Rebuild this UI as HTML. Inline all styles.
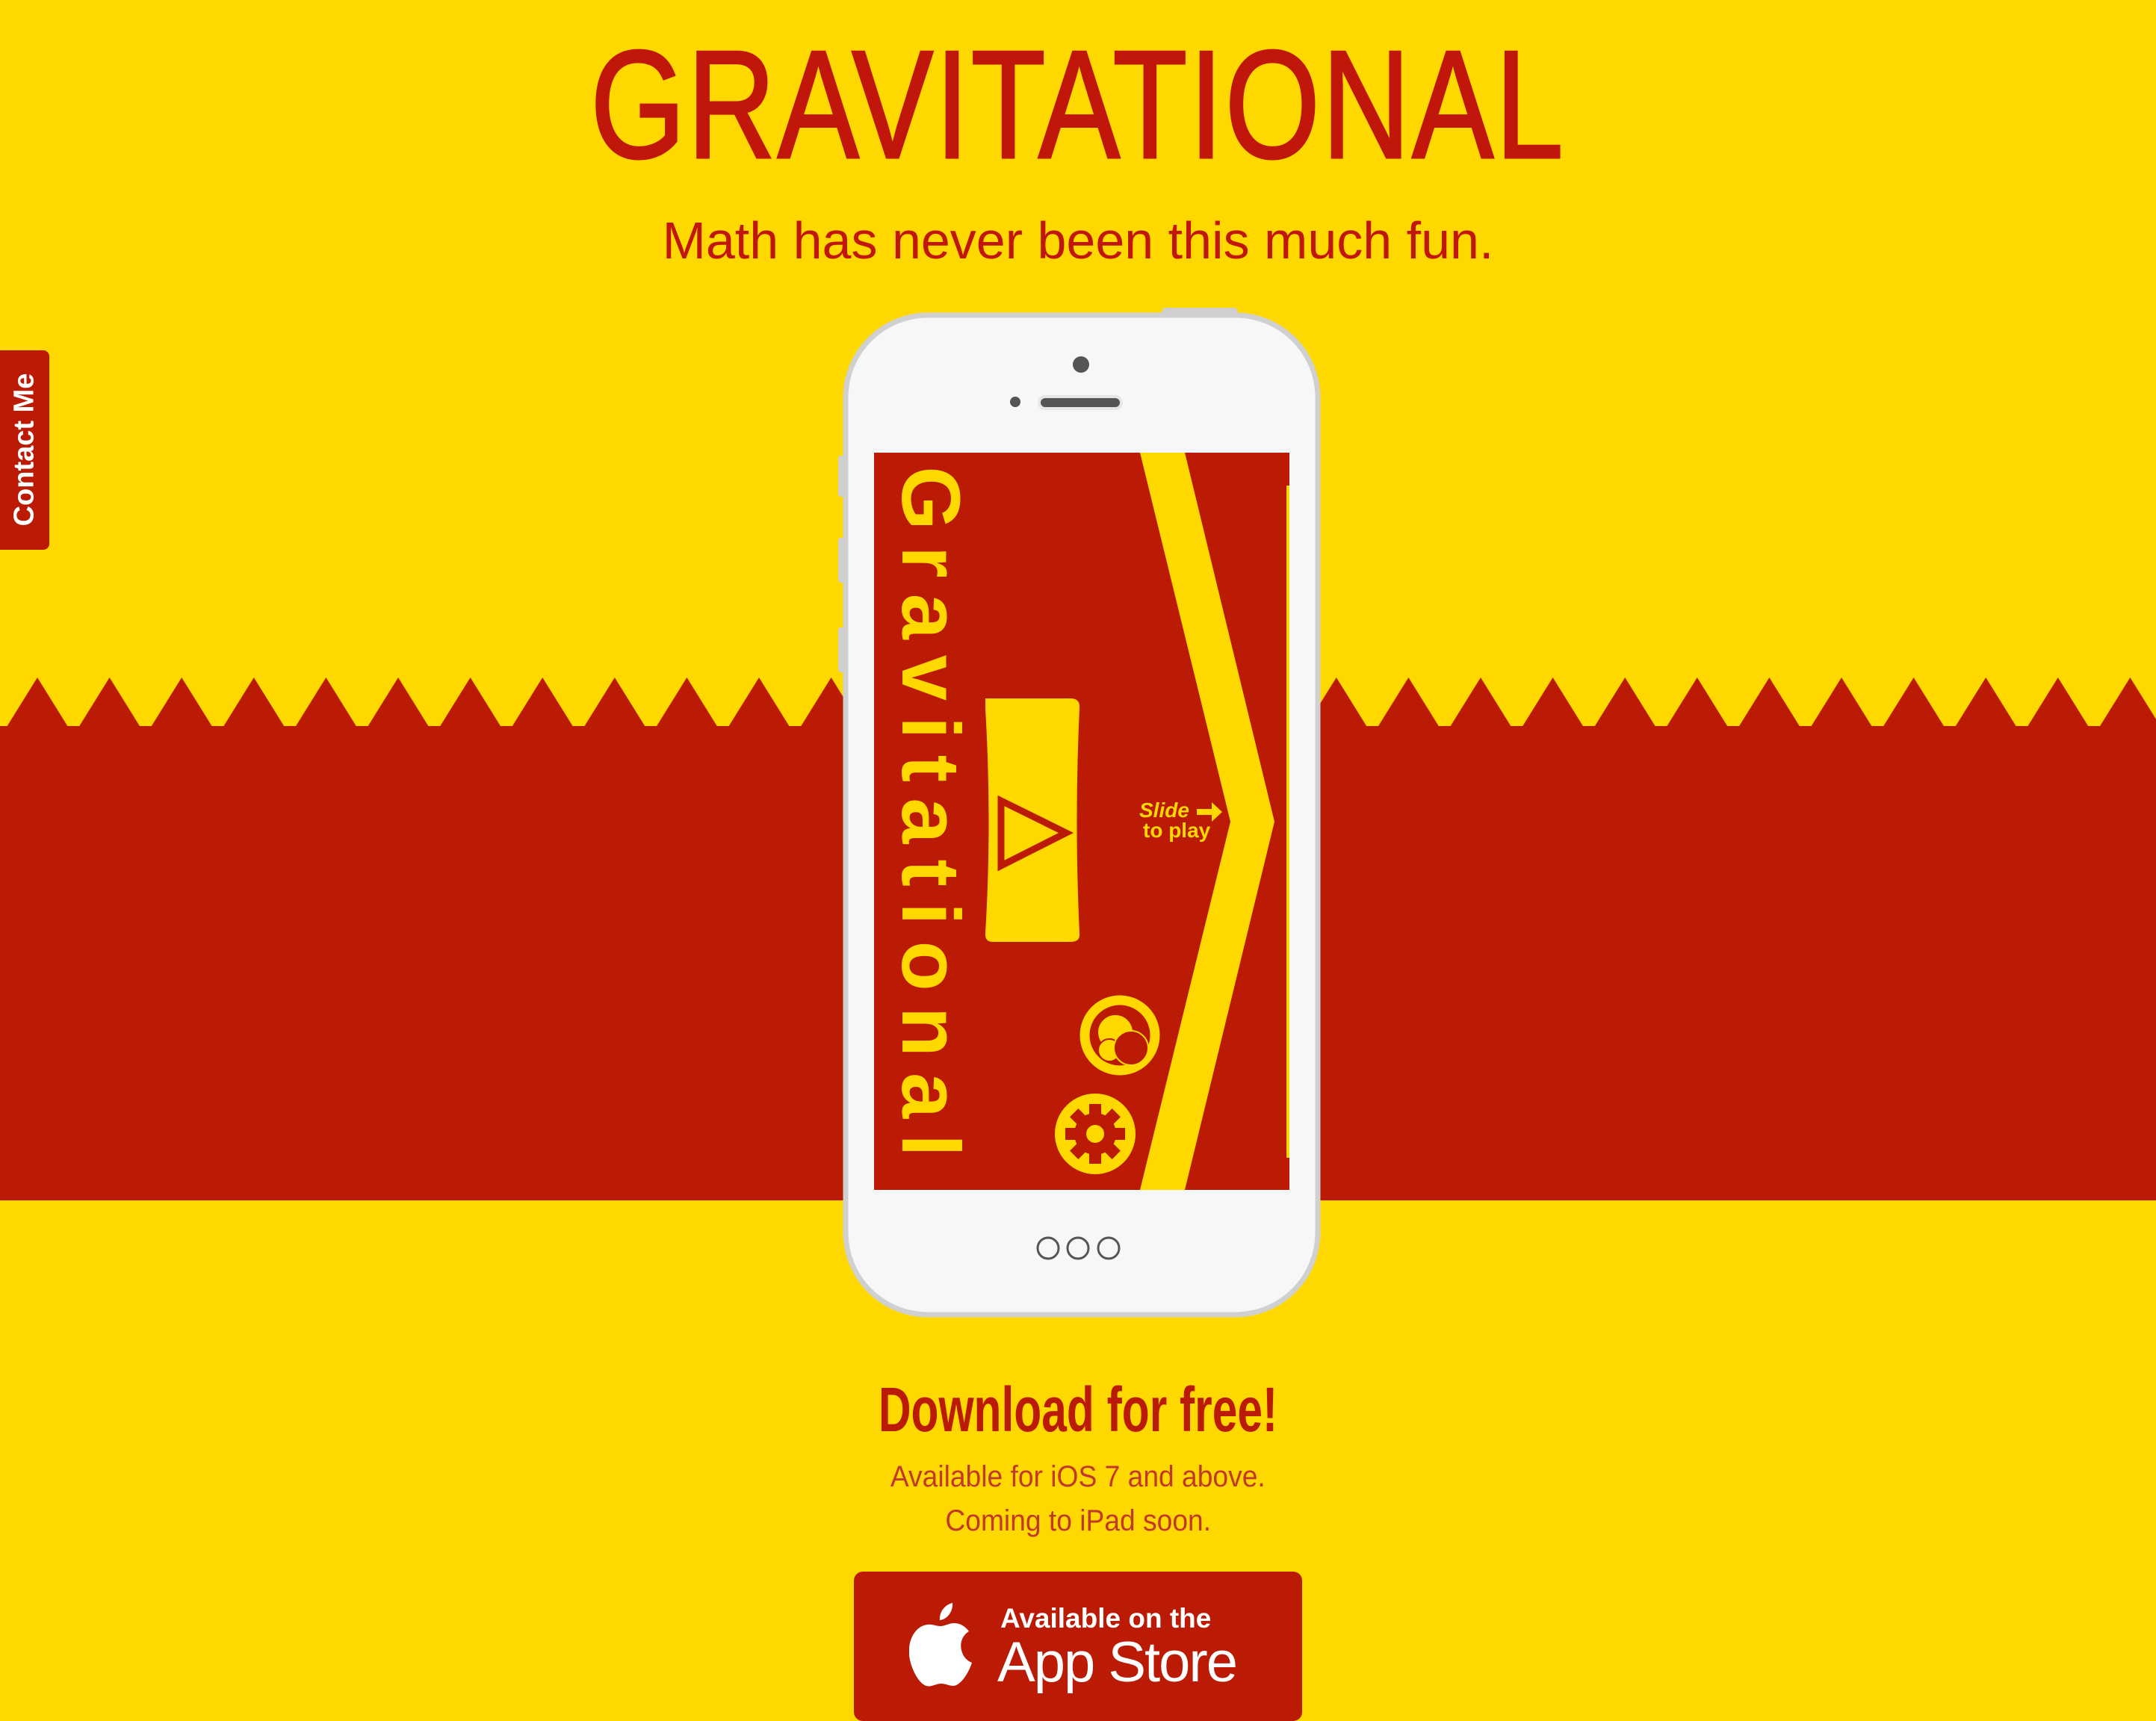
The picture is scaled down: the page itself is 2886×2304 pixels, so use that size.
<!DOCTYPE html>
<html><head><meta charset="utf-8"><style>
html,body{margin:0;padding:0;}
body{width:2886px;height:2268px;background:#ffd800;position:relative;overflow:hidden;font-family:"Liberation Sans",sans-serif;}
.abs{position:absolute;}
.title{left:0;width:2886px;top:40px;text-align:center;color:#c0170a;font-size:206px;line-height:200px;letter-spacing:3px;}
.title span{display:inline-block;transform:scaleX(0.795);transform-origin:center;-webkit-text-stroke:3px #c0170a;}
.sub{left:0;width:2886px;top:282px;text-align:center;color:#c0170a;font-size:70px;line-height:80px;}
.sub span{display:inline-block;transform:scaleX(1.0);}
.contact{left:0;top:469px;width:66px;height:267px;background:#bb1a04;border-radius:0 8px 8px 0;}
.contact div{position:absolute;left:33px;top:133px;transform:translate(-50%,-50%) rotate(-90deg);color:#fff;font-weight:bold;font-size:38px;white-space:nowrap;}
.dl{left:0;width:2886px;top:1845px;text-align:center;color:#bb1a04;font-weight:bold;font-size:84px;line-height:84px;}
.dl span{display:inline-block;transform:scaleX(0.72);}
.av{left:0;width:2886px;text-align:center;color:#c0392b;font-size:40px;line-height:48px;}
.av span{display:inline-block;transform:scaleX(0.93);}
.btn{left:1143px;top:2104px;width:600px;height:200px;background:#bb1a04;border-radius:12px;}
</style></head><body>
<div class="abs title"><span>GRAVITATIONAL</span></div>
<div class="abs sub"><span>Math has never been this much fun.</span></div>
<div class="abs contact"><div>Contact Me</div></div>

<svg class="abs" style="left:0;top:0" width="2886" height="1620">
<defs><pattern id="zz" x="0" y="907" width="96.6" height="66" patternUnits="userSpaceOnUse">
<polygon points="9,66 50,0 91,66" fill="#bb1a04"/></pattern></defs>
<rect x="0" y="907" width="2886" height="66" fill="url(#zz)"/>
<rect x="0" y="972" width="2886" height="635" fill="#bb1a04"/>
</svg>

<!-- phone -->
<svg class="abs" style="left:1100px;top:400px" width="700" height="1380">
<rect x="455" y="12" width="102" height="14" rx="6" fill="#cfcfcf"/>
<rect x="22" y="210" width="14" height="55" rx="4" fill="#cfcfcf"/>
<rect x="22" y="320" width="14" height="60" rx="4" fill="#cfcfcf"/>
<rect x="22" y="440" width="14" height="60" rx="4" fill="#cfcfcf"/>
<rect x="32" y="22" width="632" height="1338" rx="110" fill="#f6f7f8" stroke="#d0d0d0" stroke-width="7"/>
<circle cx="347" cy="88" r="11" fill="#555"/>
<circle cx="259" cy="138" r="7" fill="#555"/>
<rect x="291" y="131" width="110" height="16" rx="8" fill="#555" stroke="#e6e6e6" stroke-width="4"/>
<circle cx="303" cy="1271" r="14" fill="none" stroke="#555" stroke-width="3"/>
<circle cx="343" cy="1271" r="14" fill="none" stroke="#555" stroke-width="3"/>
<circle cx="384" cy="1271" r="14" fill="none" stroke="#555" stroke-width="3"/>
<!-- screen -->
<rect x="70" y="206" width="556" height="987" fill="#bb1a04"/>
<polygon points="426,206 486,206 606,700 486,1193 426,1193 547,700" fill="#ffd800"/>
<rect x="622" y="250" width="4" height="900" fill="#ffd800"/>
<path d="M219,535 L333,535 Q346,535 345,548 Q338,700 345,850 Q346,861 333,861 L229,861 Q218,861 219,849 Q228,700 219,549 Z" fill="#ffd800"/>
<polygon points="240,672 327,715 240,759" fill="none" stroke="#bb1a04" stroke-width="9"/>
<circle cx="399" cy="986" r="47" fill="none" stroke="#ffd800" stroke-width="13"/>
<circle cx="393" cy="982" r="24" fill="#ffd800" stroke="#bb1a04" stroke-width="2"/>
<circle cx="385" cy="1006" r="15" fill="#ffd800" stroke="#bb1a04" stroke-width="2"/>
<circle cx="414" cy="1003" r="23" fill="#bb1a04" stroke="#ffd800" stroke-width="2"/>
<circle cx="366" cy="1118" r="54" fill="#ffd800"/>
<g fill="#bb1a04" transform="translate(366,1118)">
<circle r="28"/>
<g id="t"><rect x="-8" y="-40" width="16" height="16"/></g>
<use href="#t" transform="rotate(45)"/><use href="#t" transform="rotate(90)"/><use href="#t" transform="rotate(135)"/>
<use href="#t" transform="rotate(180)"/><use href="#t" transform="rotate(225)"/><use href="#t" transform="rotate(270)"/><use href="#t" transform="rotate(315)"/>
<circle r="12" fill="#ffd800"/>
</g>
<text x="425" y="694" font-family="Liberation Sans" font-weight="bold" font-style="italic" font-size="28" fill="#ffd800">Slide</text>
<path d="M502,683 h20 v-9 l14,13 l-14,13 v-9 h-20 z" fill="#ffd800"/>
<text x="430" y="721" font-family="Liberation Sans" font-weight="bold" font-size="28" fill="#ffd800">to play</text>
<text transform="translate(137,697) rotate(90)" x="0" y="0" text-anchor="middle" dominant-baseline="middle" font-family="Liberation Sans" font-weight="bold" font-size="110" letter-spacing="21" fill="#ffd800">Gravitational</text>
</svg>

<div class="abs dl"><span>Download for free!</span></div>
<div class="abs av" style="top:1953px"><span>Available for iOS 7 and above.</span></div>
<div class="abs av" style="top:2012px"><span>Coming to iPad soon.</span></div>
<div class="abs btn">
<svg class="abs" style="left:74px;top:42px" width="84" height="114" viewBox="0 0 84 114">
<path d="M58,0 C59,11 51,22 41,23 C40,12 48,2 58,0 Z" fill="#fff"/>
<path d="M42,31 C48,31 53,27 60,27 C68,27 75,31 80,38 C70,44 68,55 70,63 C72,72 77,77 84,80 C80,92 72,106 63,110 C56,113 51,108 43,108 C35,108 30,113 23,111 C13,108 2,88 0,70 C-2,50 8,31 24,29 C31,28 36,31 42,31 Z" fill="#fff"/>
</svg>
<div class="abs" style="left:196px;top:42px;color:#fff;font-weight:bold;font-size:37px;white-space:nowrap;">Available on the</div>
<div class="abs" style="left:192px;top:78px;color:#fff;font-size:76px;white-space:nowrap;letter-spacing:-2px">App Store</div>
</div>
</body></html>
